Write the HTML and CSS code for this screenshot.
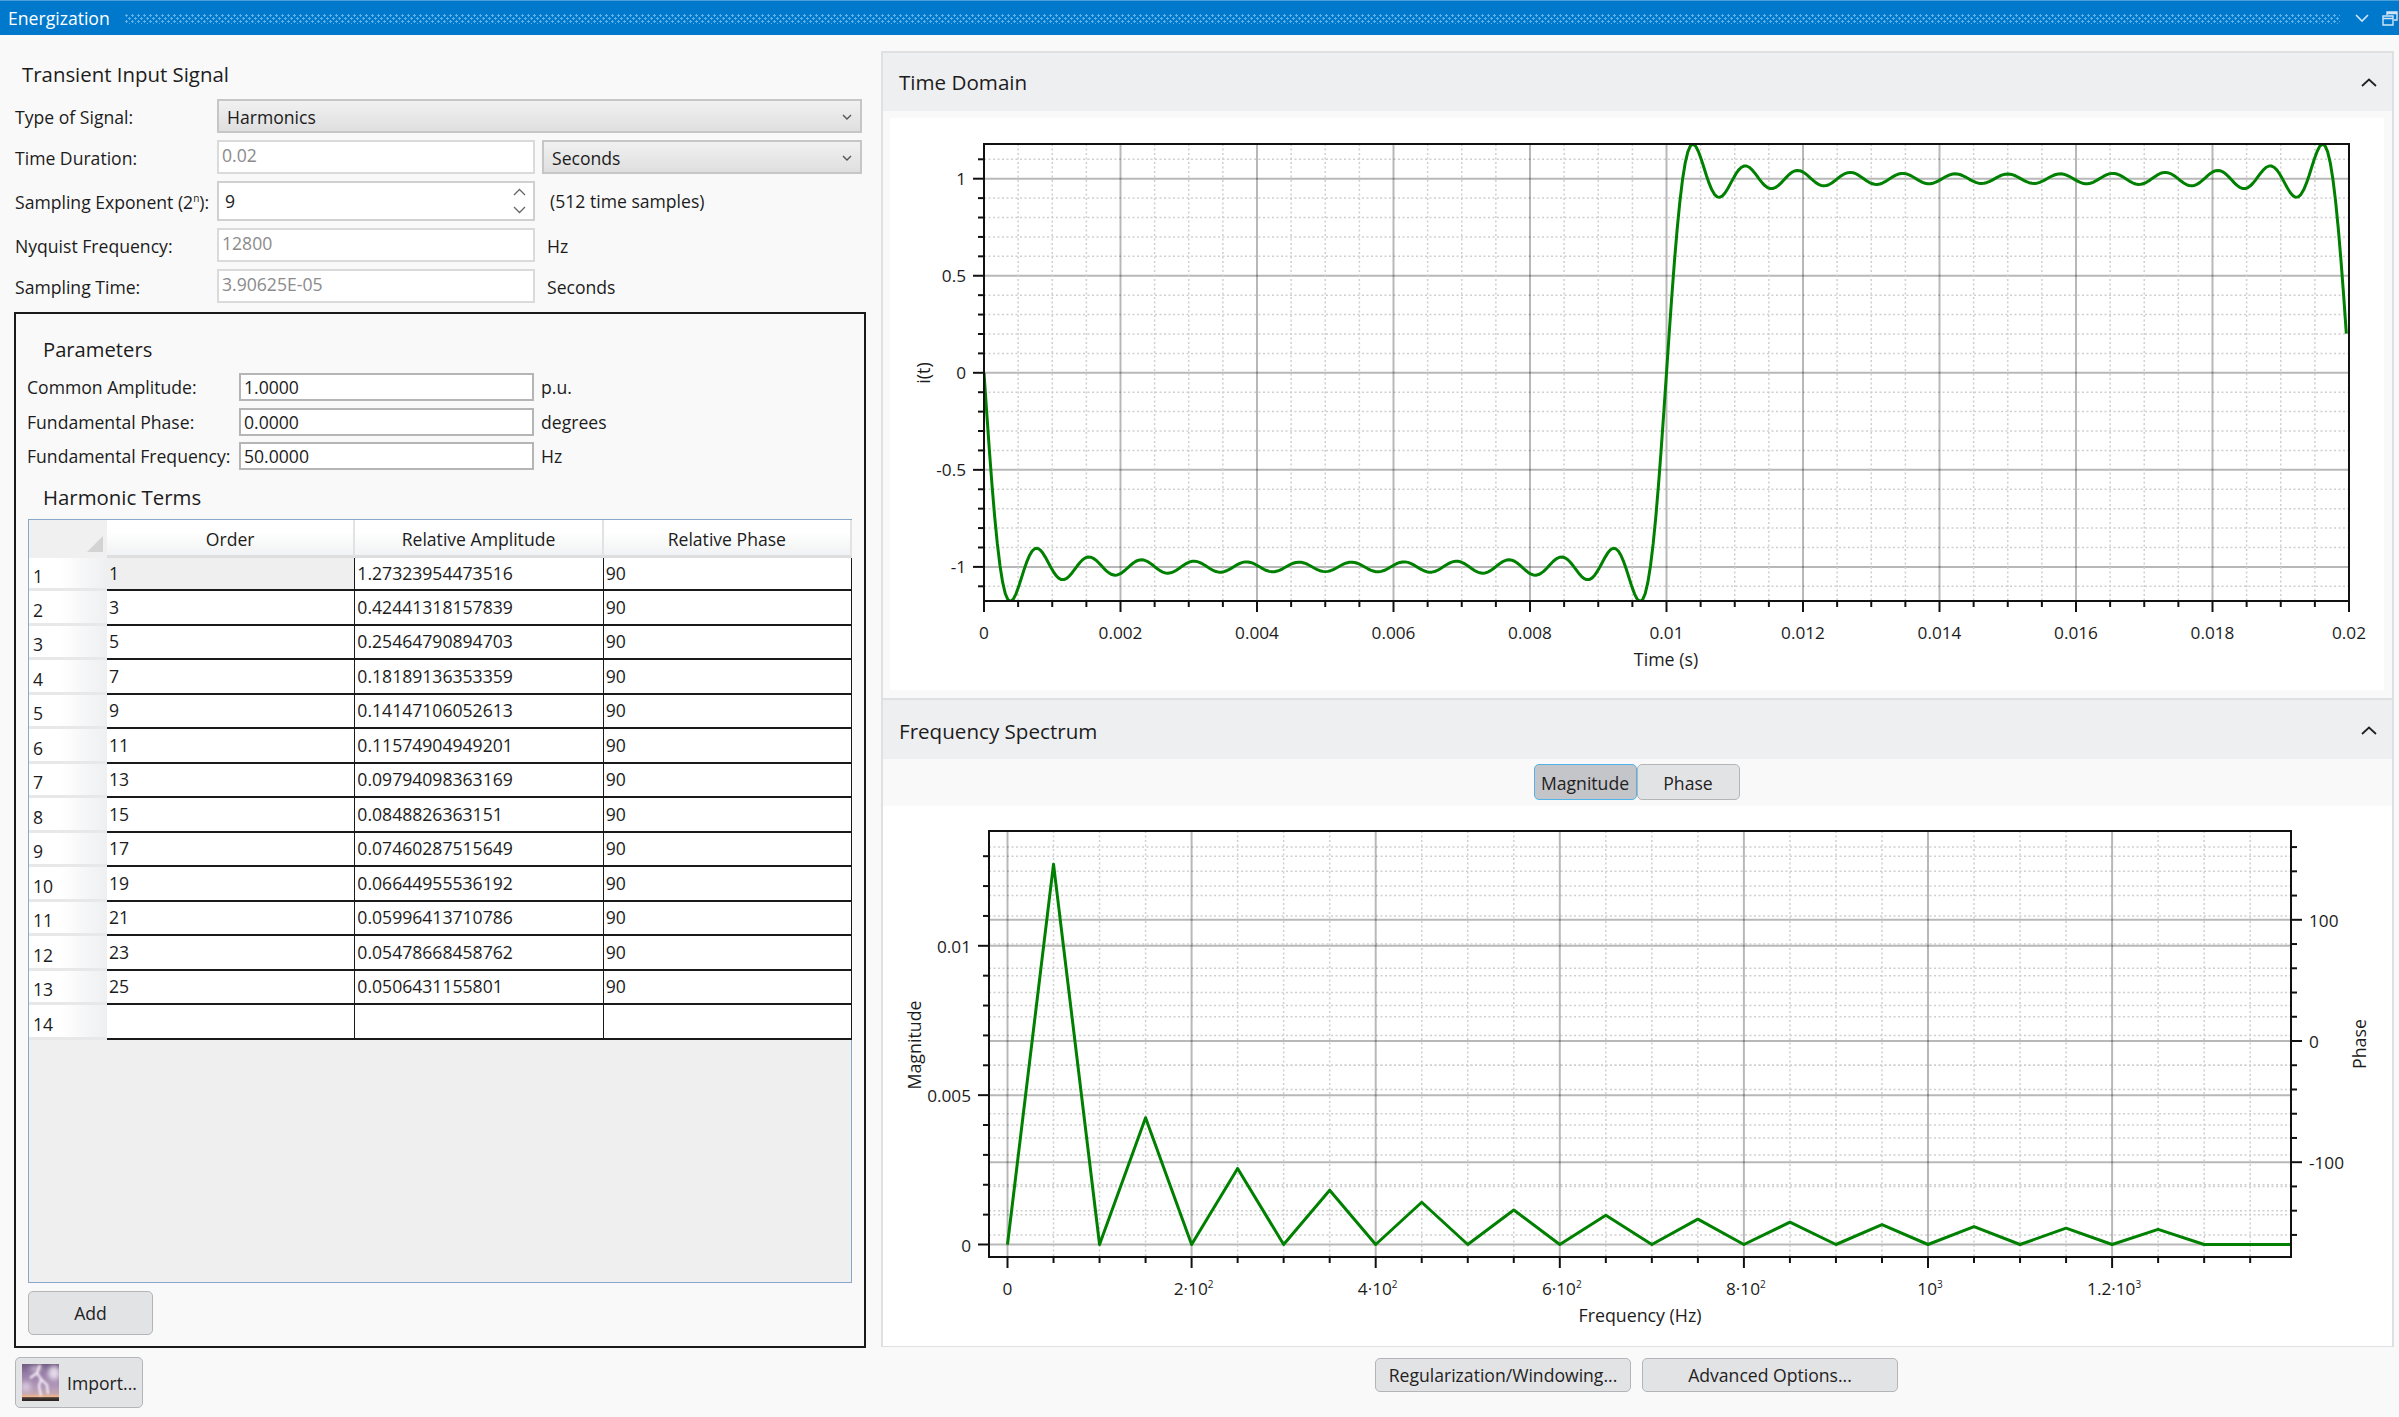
FILE: index.html
```html
<!DOCTYPE html>
<html lang="en">
<head>
  <meta charset="UTF-8">
  <title>Energization</title>
  <link rel="stylesheet" href="styles.css">
</head>
<body>

  <div class="titlebar">
    <span class="window-title">Energization</span>
    <div class="grip"></div>
    <svg class="title-chevron" width="14" height="10" viewBox="0 0 14 10"><path d="M1 2l6 6 6-6" fill="none" stroke="#cfe6f7" stroke-width="1.6"/></svg>
    <svg class="title-restore" width="16" height="15" viewBox="0 0 16 15"><path d="M5 4V1h10v8h-3M1 5h10v9H1z M1 7.500h10 M5 2.500h10" fill="none" stroke="#cfe6f7" stroke-width="1.4"/></svg>
  </div>

  <div class="main">

    <!-- Signal definition -->
    <div class="left">
      <h2 class="section-title">Transient Input Signal</h2>

      <div class="form-grid">
        <label>Type of Signal:</label>
        <div class="combo wide">Harmonics<svg width="10" height="7" viewBox="0 0 10 7"><path d="M1 1l4 4 4-4" fill="none" stroke="#555" stroke-width="1.4"/></svg></div>

        <label>Time Duration:</label>
        <input class="field disabled" type="text" value="0.02" readonly>
        <div class="combo">Seconds<svg width="10" height="7" viewBox="0 0 10 7"><path d="M1 1l4 4 4-4" fill="none" stroke="#555" stroke-width="1.4"/></svg></div>

        <label>Sampling Exponent (2<sup>n</sup>):</label>
        <div class="spinner">
          <span>9</span>
          <div class="spin-arrows">
            <svg width="13" height="8" viewBox="0 0 13 8"><path d="M1 7l5.500-5.500L12 7" fill="none" stroke="#666" stroke-width="1.3"/></svg>
            <svg width="13" height="8" viewBox="0 0 13 8"><path d="M1 1l5.500 5.500L12 1" fill="none" stroke="#666" stroke-width="1.3"/></svg>
          </div>
        </div>
        <span class="unit samples">(512 time samples)</span>

        <label>Nyquist Frequency:</label>
        <input class="field disabled" type="text" value="12800" readonly>
        <span class="unit">Hz</span>

        <label>Sampling Time:</label>
        <input class="field disabled" type="text" value="3.90625E-05" readonly>
        <span class="unit">Seconds</span>
      </div>

      <div class="params">
        <h3 class="section-title params-title">Parameters</h3>

        <div class="param-grid">
          <label>Common Amplitude:</label>
          <input class="field param" type="text" value="1.0000">
          <span>p.u.</span>

          <label>Fundamental Phase:</label>
          <input class="field param" type="text" value="0.0000">
          <span>degrees</span>

          <label>Fundamental Frequency:</label>
          <input class="field param" type="text" value="50.0000">
          <span>Hz</span>
        </div>

        <h3 class="section-title terms-title">Harmonic Terms</h3>

        <div class="terms-box">
          <table class="terms">
            <thead>
              <tr>
                <th class="corner"><div class="corner-mark"></div></th>
                <th>Order</th>
                <th>Relative Amplitude</th>
                <th>Relative Phase</th>
              </tr>
            </thead>
            <tbody>
              <tr class="first"><th>1</th><td class="selected">1</td><td>1.27323954473516</td><td>90</td></tr>
              <tr><th>2</th><td>3</td><td>0.42441318157839</td><td>90</td></tr>
              <tr><th>3</th><td>5</td><td>0.25464790894703</td><td>90</td></tr>
              <tr><th>4</th><td>7</td><td>0.18189136353359</td><td>90</td></tr>
              <tr><th>5</th><td>9</td><td>0.14147106052613</td><td>90</td></tr>
              <tr><th>6</th><td>11</td><td>0.11574904949201</td><td>90</td></tr>
              <tr><th>7</th><td>13</td><td>0.09794098363169</td><td>90</td></tr>
              <tr><th>8</th><td>15</td><td>0.0848826363151</td><td>90</td></tr>
              <tr><th>9</th><td>17</td><td>0.07460287515649</td><td>90</td></tr>
              <tr><th>10</th><td>19</td><td>0.06644955536192</td><td>90</td></tr>
              <tr><th>11</th><td>21</td><td>0.05996413710786</td><td>90</td></tr>
              <tr><th>12</th><td>23</td><td>0.05478668458762</td><td>90</td></tr>
              <tr><th>13</th><td>25</td><td>0.0506431155801</td><td>90</td></tr>
              <tr><th>14</th><td></td><td></td><td></td></tr>
            </tbody>
          </table>
        </div>

        <button class="btn add-btn">Add</button>
      </div>

      <button class="btn import-btn">
        <svg width="37" height="37" viewBox="0 0 37 37">
          <defs>
            <linearGradient id="sky" x1="0" y1="0" x2="0" y2="1">
              <stop offset="0" stop-color="#6f5a80"/>
              <stop offset="0.3" stop-color="#9a80aa"/>
              <stop offset="0.65" stop-color="#b39ab8"/>
              <stop offset="0.8" stop-color="#c4a6ae"/>
              <stop offset="0.88" stop-color="#eeb48c"/>
              <stop offset="0.91" stop-color="#4a3a34"/>
              <stop offset="1" stop-color="#26211f"/>
            </linearGradient>
            <filter id="soft"><feGaussianBlur stdDeviation="0.9"/></filter>
            <filter id="softer"><feGaussianBlur stdDeviation="2.6"/></filter>
          </defs>
          <rect width="37" height="37" fill="url(#sky)"/>
          <g filter="url(#softer)">
            <ellipse cx="32" cy="9" rx="6" ry="7" fill="#e6dcea"/>
            <ellipse cx="4" cy="23" rx="5" ry="5" fill="#d8c8de"/>
            <ellipse cx="14" cy="5" rx="7" ry="3" fill="#c9b6d2"/>
          </g>
          <path d="M18 1l-3 8 4 6-2 7 2 10M19 15l6 6 1 9M15 9L8 14" fill="none" stroke="#f6eef8" stroke-width="2.200" filter="url(#soft)"/>
        </svg>
        Import...
      </button>
    </div>

    <!-- Plots -->
    <div class="right">
      <section class="panel time-panel">
        <header class="panel-header">
          <span>Time Domain</span>
          <svg width="16" height="9" viewBox="0 0 16 9"><path d="M1 8l7-6.500L15 8" fill="none" stroke="#222" stroke-width="1.8"/></svg>
        </header>
        <div class="time-body">
          <svg id="timeChart" class="chart" width="1494" height="572"></svg>
        </div>
      </section>

      <section class="panel freq-panel">
        <header class="panel-header">
          <span>Frequency Spectrum</span>
          <svg width="16" height="9" viewBox="0 0 16 9"><path d="M1 8l7-6.500L15 8" fill="none" stroke="#222" stroke-width="1.8"/></svg>
        </header>
        <div class="toggle-row">
          <button class="btn toggle active">Magnitude</button>
          <button class="btn toggle">Phase</button>
        </div>
        <svg id="freqChart" class="chart" width="1509" height="540"></svg>
      </section>

      <div class="actions">
        <button class="btn action-btn">Regularization/Windowing...</button>
        <button class="btn action-btn">Advanced Options...</button>
      </div>
    </div>

  </div>

  <script src="charts.js"></script>
</body>
</html>
```

FILE: styles.css
```css
* {
  box-sizing: border-box;
}

body {
  margin: 0;
  width: 2399px;
  height: 1417px;
  overflow: hidden;
  background: #f9f9f9;
  color: #1c1c1c;
  font-family: "Open Sans", "Noto Sans", sans-serif;
  font-size: 17.600px;
}

.titlebar {
  display: flex;
  align-items: center;
  height: 35px;
  padding: 0 1px 0 8px;
  background: #0078cc;
  border-top: 1px solid #4a9fd8;
  color: #fff;
}

.window-title {
  font-size: 17.600px;
  width: 117px;
}

.grip {
  flex: 1;
  height: 10px;
  margin: 1px 15px 0 0;
  background-image:
    radial-gradient(circle at 1.5px 1.5px, #5fb0e6 1px, transparent 1.3px),
    radial-gradient(circle at 4.5px 4.5px, #5fb0e6 1px, transparent 1.3px);
  background-size: 6px 6px;
}

.title-restore {
  margin-left: 13px;
}

.main {
  display: flex;
  height: 1382px;
}

.left {
  width: 852px;
  margin-left: 14px;
  margin-right: 15px;
}

.section-title {
  margin: 0;
  font-size: 20.400px;
  font-weight: normal;
  line-height: 30px;
}

.left > .section-title {
  padding: 24px 0 0 8px;
  height: 64px;
}

.form-grid {
  display: grid;
  grid-template-columns: 202px 318px 327px;
  row-gap: 7px;
  margin-left: 1px;
}

.form-grid label {
  align-self: center;
  padding-top: 2px;
  white-space: nowrap;
}

.form-grid sup {
  font-size: 10px;
  line-height: 0;
}

.combo {
  display: flex;
  align-items: center;
  justify-content: space-between;
  height: 34px;
  margin-left: 7px;
  padding: 2px 8px 0 8px;
  background: linear-gradient(#f1f1f1, #dfdfdf);
  border: 2px solid #c6c6c6;
}

.combo.wide {
  grid-column: 2 / 4;
  margin-left: 0;
}

.field {
  height: 34px;
  padding: 0 2px 5px 3px;
  border: 2px solid #dadada;
  background: #fff;
  color: #1c1c1c;
  font: inherit;
  outline: none;
}

.field.disabled {
  color: #8b8b8b;
}

.spinner {
  display: flex;
  align-items: center;
  justify-content: space-between;
  height: 40px;
  padding: 0 7px 0 6px;
  background: #fff;
  border: 2px solid #d0d0d0;
}

.spin-arrows {
  display: flex;
  flex-direction: column;
  gap: 10px;
}

.unit {
  align-self: center;
  padding: 2px 0 0 12px;
}

.unit.samples {
  padding-left: 15px;
  padding-top: 0;
}

.params {
  width: 852px;
  height: 1036px;
  margin-top: 9px;
  padding: 0 12px;
  border: 2px solid #1a1a1a;
}

.params-title {
  padding: 20px 0 0 15px;
  height: 59px;
  font-size: 20.200px;
}

.param-grid {
  display: grid;
  grid-template-columns: 212px 295px auto;
  row-gap: 6.500px;
  margin-left: -1px;
  align-items: center;
}

.field.param {
  height: 28px;
  padding: 0 2px 0 3px;
  border-color: #b5b5b5;
}

.param-grid span {
  padding-left: 7px;
}

.terms-title {
  padding: 12px 0 0 15px;
  height: 49px;
}

.terms-box {
  height: 764px;
  background: #efefef;
  border: 1.500px solid #8aa8cc;
}

.terms {
  width: 823px;
  border-spacing: 0;
  table-layout: fixed;
  background: #fff;
}

.terms thead th {
  height: 38px;
  padding: 3px 0 0;
  font-weight: normal;
  background: linear-gradient(#fff 35%, #f1f2f3);
  border-right: 2px solid #e2e2e2;
  border-bottom: 3px solid #dedede;
}

.terms thead th.corner {
  width: 78px;
  background: #f0f0f0;
  border-right: 0;
  border-bottom: 0;
  vertical-align: bottom;
}

.corner-mark {
  width: 16px;
  height: 16px;
  margin: 0 4px 6px auto;
  background: #d3d3d3;
  clip-path: polygon(100% 0, 100% 100%, 0 100%);
}

.terms tbody th {
  height: 34.500px;
  padding: 6px 0 0 4px;
  font-weight: normal;
  text-align: left;
  background: linear-gradient(90deg, #fff 40%, #eeeff1);
  border-bottom: 3px solid #e8e8e8;
}

.terms tr.first th,
.terms tr.first td {
  height: 33px;
}

.terms td {
  padding: 0 0 1px 2px;
  white-space: nowrap;
  border-right: 1.500px solid #1a1a1a;
  border-bottom: 2px solid #1a1a1a;
}

.terms td.selected {
  background: #efefef;
}

.btn {
  background: #e2e3e5;
  border: 1.500px solid #b3b5b8;
  border-radius: 5px;
  color: #222;
  font: inherit;
  padding: 0;
}

.add-btn {
  display: block;
  width: 125px;
  height: 44px;
  margin-top: 8px;
}

.import-btn {
  display: flex;
  align-items: center;
  gap: 8px;
  width: 128px;
  height: 51px;
  margin: 9px 0 0 1px;
  padding-left: 6px;
}

.right {
  width: 1513px;
  padding-top: 16px;
}

.panel {
  border: 2px solid #dfe0e2;
}

.time-panel {
  border-bottom: 0;
}

.freq-panel {
  border-bottom-width: 1px;
}

.panel-header {
  display: flex;
  align-items: center;
  justify-content: space-between;
  padding: 0 15px 0 16px;
  background: #eeeff1;
  font-size: 20.600px;
}

.time-panel .panel-header {
  height: 58px;
}

.freq-panel .panel-header {
  height: 59px;
  padding-top: 2px;
}

.time-body {
  padding: 7px 8px 8px 7px;
}

.chart {
  display: block;
  background: #fff;
}

.toggle-row {
  display: flex;
  justify-content: center;
  height: 47px;
  padding: 5px 2px 0 0;
}

.toggle {
  width: 103px;
  height: 36px;
  padding-top: 2px;
}

.toggle.active {
  background: #c4c5c9;
  border: 1.500px solid #52b2ea;
}

.actions {
  display: flex;
  justify-content: center;
  gap: 11px;
  margin-top: 11px;
  padding-right: 2px;
}

.action-btn {
  width: 256px;
  height: 34px;
}

/* chart parts, drawn from charts.js */
.grid-minor {
  stroke: #cfcfcf;
  stroke-width: 1.500;
  stroke-dasharray: 2 2.500;
}

.grid-major {
  stroke: rgba(0, 0, 0, 0.28);
  stroke-width: 2;
}

.frame {
  fill: none;
  stroke: #111;
  stroke-width: 2;
}

.tick-mark {
  stroke: #111;
  stroke-width: 2;
}

.trace {
  fill: none;
  stroke: #008000;
  stroke-width: 3;
  stroke-linejoin: round;
}

.chart text {
  fill: #1c1c1c;
  font-size: 17.200px;
}

.chart .sup {
  font-size: 10px;
}

.chart text.axis-title {
  font-size: 17.800px;
}
```

FILE: charts.js
```js
const terms = [
  [1, 1.27323954473516], [3, 0.42441318157839], [5, 0.25464790894703],
  [7, 0.18189136353359], [9, 0.14147106052613], [11, 0.11574904949201],
  [13, 0.09794098363169], [15, 0.0848826363151], [17, 0.07460287515649],
  [19, 0.06644955536192], [21, 0.05996413710786], [23, 0.05478668458762],
  [25, 0.0506431155801]
];

function line(x1, y1, x2, y2, cls) {
  return `<line x1="${x1}" y1="${y1}" x2="${x2}" y2="${y2}" class="${cls}"/>`;
}

function label(x, y, text, anchor) {
  return `<text x="${x}" y="${y}" text-anchor="${anchor}">${text}</text>`;
}

function bottomTitle(x, y, text) {
  return `<text class="axis-title" x="${x}" y="${y}" text-anchor="middle">${text}</text>`;
}

function sideTitle(x, y, text) {
  return `<text class="axis-title" x="${x}" y="${y}" text-anchor="middle" transform="rotate(-90 ${x} ${y})">${text}</text>`;
}

function drawTime() {
  const plot = { x: 94, y: 26, w: 1365, h: 457 };
  const bottom = plot.y + plot.h, right = plot.x + plot.w;
  const toX = t => plot.x + t / 0.02 * plot.w;
  const toY = v => 254.8 - v * 194.1;
  let out = "";

  for (let i = -11; i <= 11; i++) {
    const major = i % 5 === 0, y = toY(i / 10);
    out += line(plot.x, y, right, y, major ? "grid-major" : "grid-minor");
    out += line(plot.x - (major ? 11 : 6), y, plot.x, y, "tick-mark");
    if (major) {
      out += label(76, y + 6, String(i / 10), "end");
    }
  }
  for (let i = 0; i <= 40; i++) {
    const major = i % 4 === 0, x = toX(i * 0.0005);
    if (i > 0 && i < 40) {
      out += line(x, plot.y, x, bottom, major ? "grid-major" : "grid-minor");
    }
    out += line(x, bottom, x, bottom + (major ? 11 : 6), "tick-mark");
    if (major) {
      out += label(x, 521, String(+(i * 0.0005).toFixed(3)), "middle");
    }
  }

  const pts = [];
  for (let k = 0; k < 512; k++) {
    const t = k * 0.02 / 512;
    let v = 0;
    terms.forEach(([n, a]) => { v -= a * Math.sin(2 * Math.PI * n * 50 * t); });
    pts.push(toX(t).toFixed(2) + "," + toY(v).toFixed(2));
  }

  out += `<clipPath id="timeClip"><rect x="${plot.x}" y="${plot.y}" width="${plot.w}" height="${plot.h}"/></clipPath>`;
  out += `<polyline class="trace" clip-path="url(#timeClip)" points="${pts.join(" ")}"/>`;
  out += `<rect class="frame" x="${plot.x}" y="${plot.y}" width="${plot.w}" height="${plot.h}"/>`;
  out += bottomTitle(776, 548, "Time (s)");
  out += sideTitle(40, 255, "i(t)");
  document.getElementById("timeChart").innerHTML = out;
}

function drawFreq() {
  const plot = { x: 106, y: 25, w: 1302, h: 426 };
  const bottom = plot.y + plot.h, right = plot.x + plot.w;
  const toX = f => 124.5 + f * 0.9205;
  const toY = m => 438.5 - m * 29870;
  const phaseY = p => 235 - p * 1.212;
  let out = "";

  for (let i = 0; i <= 13; i++) {
    const major = i % 5 === 0, y = toY(i / 1000);
    out += line(plot.x, y, right, y, major ? "grid-major" : "grid-minor");
    out += line(plot.x - (major ? 11 : 6), y, plot.x, y, "tick-mark");
    if (major) {
      out += label(88, y + 7, String(i / 1000), "end");
    }
  }
  for (let p = -160; p <= 160; p += 20) {
    const major = p % 100 === 0, y = phaseY(p);
    out += line(plot.x, y, right, y, major ? "grid-major" : "grid-minor");
    out += line(right, y, right + (major ? 11 : 6), y, "tick-mark");
    if (major) {
      out += `<text x="1426" y="${y + 7}" clip-path="url(#phaseClip)">${p}</text>`;
    }
  }
  out += `<clipPath id="phaseClip"><rect x="1420" y="0" width="43" height="540"/></clipPath>`;

  const xLabels = {
    0: "0",
    200: '2·10<tspan class="sup" dy="-7">2</tspan>',
    400: '4·10<tspan class="sup" dy="-7">2</tspan>',
    600: '6·10<tspan class="sup" dy="-7">2</tspan>',
    800: '8·10<tspan class="sup" dy="-7">2</tspan>',
    1000: '10<tspan class="sup" dy="-7">3</tspan>',
    1200: '1.2·10<tspan class="sup" dy="-7">3</tspan>'
  };
  for (let f = 0; f <= 1350; f += 50) {
    const major = f % 200 === 0, x = toX(f);
    out += line(x, plot.y, x, bottom, major ? "grid-major" : "grid-minor");
    out += line(x, bottom, x, bottom + (major ? 11 : 6), "tick-mark");
    if (major) {
      out += label(x + (f ? 2 : 0), 489, xLabels[f], "middle");
    }
  }

  // every odd harmonic lands on its own bin, the even bins stay at zero
  const pts = [toX(0) + "," + toY(0)];
  terms.forEach(([n, a]) => {
    pts.push(toX(n * 50) + "," + toY(a / 100));
    pts.push(toX((n + 1) * 50) + "," + toY(0));
  });
  pts.push(right + "," + toY(0));

  out += `<polyline class="trace" points="${pts.join(" ")}"/>`;
  out += `<rect class="frame" x="${plot.x}" y="${plot.y}" width="${plot.w}" height="${plot.h}"/>`;
  out += bottomTitle(757, 516, "Frequency (Hz)");
  out += sideTitle(38, 239, "Magnitude");
  out += sideTitle(1483, 238, "Phase");
  document.getElementById("freqChart").innerHTML = out;
}

drawTime();
drawFreq();
```
